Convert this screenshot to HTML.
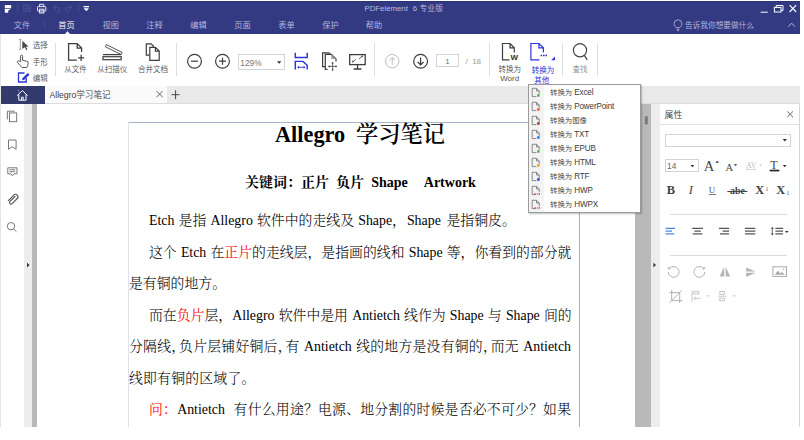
<!DOCTYPE html>
<html lang="zh-CN">
<head>
<meta charset="utf-8">
<title>PDFelement 6 专业版</title>
<style>
html,body{margin:0;padding:0;background:#fff;}
body{font-weight:350;width:804px;height:440px;position:relative;overflow:hidden;font-family:"Liberation Sans","Noto Sans CJK SC",sans-serif;}
#app{position:absolute;left:0;top:0;width:800px;height:427px;background:#fff;overflow:hidden;}
#app>*{position:absolute;}
#titlebar{left:0;top:1px;width:800px;height:33px;background:#333a82;box-shadow:inset 0 1px 0 #2b3179;}
.menu{position:absolute;font-size:8.2px;line-height:10px;color:#b9bde2;white-space:pre;transform:translateX(-50%);}
.menu.active{color:#fff;}
.rt{position:absolute;font-size:7.5px;line-height:9px;color:#4f4f4f;white-space:nowrap;}
.rtc{position:absolute;font-size:7.5px;line-height:9.6px;color:#4f4f4f;white-space:nowrap;transform:translateX(-50%);text-align:center;}
.vsep{position:absolute;width:1px;background:#dedede;}
#tabbar{left:0;top:86px;width:800px;height:17.5px;background:#e9e9e9;box-shadow:inset 0 -1px 0 #dcdcdc;}
#hometab{position:absolute;left:1px;top:0;width:43.5px;height:17.5px;background:#333a6e;}
#doctab{position:absolute;left:44.5px;top:0;width:122.5px;height:16.7px;background:#fafafa;}
#page{left:128px;top:122px;width:452px;height:320px;border:1px solid #dfe2ec;border-top-color:#a9b1cb;border-right-color:#a9b0cb;background:#fff;box-sizing:border-box;}
.doc{font-family:"Liberation Serif","Noto Serif CJK SC",serif;color:#000;font-weight:300;}
.ln{position:absolute;white-space:pre;font-size:13.87px;line-height:16px;word-spacing:0.7px;}
.ln i{font-style:normal;}
.ln b.c{font-weight:normal;margin-right:-0.45em;}
.red{color:#ff0a0a;font-weight:400;}
.j{text-align:justify;text-align-last:justify;}
#dropdown{left:528px;top:84px;width:113px;height:128.5px;background:#fff;border:1px solid #9b9b9b;box-sizing:border-box;box-shadow:1px 1px 1.5px rgba(0,0,0,0.25);}
#dropdown .gut{position:absolute;left:0;top:0;width:14.5px;height:100%;background:#f3f3f3;}
.dd{position:absolute;left:21px;font-size:7.4px;line-height:9px;color:#3a3a3a;white-space:pre;}
.dd .la{font-size:8.1px;letter-spacing:-0.15px;display:inline-block;transform:scaleY(1.12);transform-origin:50% 75%;}
#props{left:660px;top:103.5px;width:139.5px;height:324px;background:#fff;border-right:1px solid #d6d6d6;box-sizing:border-box;}
.pt{position:absolute;font-family:"Liberation Serif",serif;font-weight:400;color:#444;line-height:14px;white-space:nowrap;}
#icons{left:0;top:0;width:804px;height:440px;pointer-events:none;}
</style>
</head>
<body>
<div id="app">
  <div id="titlebar">
    <div class="menu" style="left:404.5px;top:2.6px;font-size:7.8px;transform:none;left:364.5px;word-spacing:0.3px;">PDFelement  6 专业版</div>
    <div class="menu" style="left:22px;top:20.2px">文件</div>
    <div class="menu active" style="left:66.5px;top:20.2px">首页</div>
    <div class="menu" style="left:110.7px;top:20.2px">视图</div>
    <div class="menu" style="left:154.5px;top:20.2px">注释</div>
    <div class="menu" style="left:198.5px;top:20.2px">编辑</div>
    <div class="menu" style="left:242.5px;top:20.2px">页面</div>
    <div class="menu" style="left:286.5px;top:20.2px">表单</div>
    <div class="menu" style="left:330.5px;top:20.2px">保护</div>
    <div class="menu" style="left:374px;top:20.2px">帮助</div>
    <div class="menu" style="left:719.5px;top:20px;font-size:7.7px;color:#b9bde0">告诉我你想要做什么</div>
  </div>
  <div id="ribbon" style="left:0;top:34px;width:800px;height:52px;background:#fff;border-left:1px solid #e4e4e4;box-sizing:border-box;">
    <div class="rt" style="left:31.7px;top:7.3px">选择</div>
    <div class="rt" style="left:31.7px;top:23.8px">手形</div>
    <div class="rt" style="left:31.7px;top:40.2px">编辑</div>
    <div class="vsep" style="left:53.5px;top:9px;height:33px"></div>
    <div class="rtc" style="left:74.5px;top:30.8px">从文件</div>
    <div class="rtc" style="left:111.2px;top:30.8px">从扫描仪</div>
    <div class="rtc" style="left:152px;top:30.8px">合并文档</div>
    <div class="vsep" style="left:175px;top:9px;height:33px"></div>
    <div style="position:absolute;left:237px;top:20px;width:47px;height:15.5px;border:1px solid #d3d3d3;box-sizing:border-box;"></div>
    <div class="rt" style="left:239.3px;top:24.6px;font-size:8.3px;color:#777">129%</div>
    <div class="vsep" style="left:373px;top:9px;height:33px"></div>
    <div style="position:absolute;left:435.3px;top:20px;width:22.5px;height:12.5px;border:1px solid #d3d3d3;box-sizing:border-box;"></div>
    <div class="rtc" style="left:446.5px;top:23.1px;font-size:8px;color:#777">1</div>
    <div class="rt" style="left:464.5px;top:23.1px;font-size:8px;color:#999;white-space:pre;">/  18</div>
    <div class="vsep" style="left:488px;top:9px;height:33px"></div>
    <div class="rt wlet" style="left:509.5px;top:19.2px;font-size:8px;font-weight:bold;color:#333;font-family:'Liberation Sans',sans-serif;">W</div>
    <div class="rtc" style="left:508.7px;top:30.8px">转换为<br><span style="font-size:8px">Word</span></div>
    <div class="rtc" style="left:542px;top:32.2px;color:#2a35d8;font-weight:400;line-height:9.4px">转换为<br><span style="position:relative;left:-1.3px">其他</span></div>
    <div class="vsep" style="left:561px;top:9px;height:33px"></div>
    <div class="rtc" style="left:579px;top:30.8px;color:#8a8a8a">查找</div>
    <div class="vsep" style="left:596px;top:9px;height:33px"></div>
  </div>
  <div id="tabbar">
    <div id="hometab"></div>
    <div id="doctab"><div class="rt" style="left:5px;top:4.3px;font-size:8.6px;line-height:10px;color:#444">Allegro学习笔记</div></div>
  </div>
  <div id="sidebar" style="left:0;top:103.5px;width:23.5px;height:324px;background:#fff;border-left:1px solid #e4e4e4;box-sizing:border-box;"></div>
  <div style="left:23.5px;top:103.5px;width:8.7px;height:324px;background:#ededed;"></div>
  <div style="left:32.2px;top:103.5px;width:5px;height:324px;background:#b9b9b9;"></div>
  <div style="left:635px;top:103.5px;width:16.2px;height:324px;background:#b9b9b9;"></div>
  <div style="left:651.2px;top:103.5px;width:8.8px;height:324px;background:#ededed;"></div>
  <div id="page" class="doc">

      <div class="ln ttl" style="left:146px;top:-2.2px;font-weight:600;font-size:22.3px;line-height:28px;word-spacing:-0.2px;"><b>Allegro</b>  学习笔记</div>
      <div class="ln sub" style="left:116px;top:50.5px;font-weight:bold;font-size:14px;line-height:18px;word-spacing:0.6px;">关键词：正片<span style="margin-left:3px"> </span>负片<span style="margin-left:3px"> </span>Shape   <span style="margin-left:3.7px">Artwork</span></div>
      <div class="ln" style="left:20px;top:90px;"><i>Etch</i> 是指 <i>Allegro</i> 软件中的走线及 <i>Shape</i>，<i style="margin-left:1px">Shape</i> <span style="margin-left:1.5px">是指铜皮。</span></div>
      <div class="ln j" style="left:20px;width:422px;top:121.5px;">这个 <i>Etch</i> 在<span class="red">正片</span>的走线层，是指画的线和 <i>Shape</i> 等，你看到的部分就</div>
      <div class="ln" style="left:0px;top:153px;">是有铜的地方。</div>
      <div class="ln j" style="left:20px;width:422px;top:184.5px;">而在<span class="red">负片</span>层，<i>Allegro</i> 软件中是用 <i>Antietch</i> 线作为 <i>Shape</i> 与 <i>Shape</i> 间的</div>
      <div class="ln j" style="left:0px;width:442px;top:216px;">分隔线<b class="c">，</b>负片层铺好铜后<b class="c">，</b>有 <i>Antietch</i> 线的地方是没有铜的<b class="c">，</b>而无 <i>Antietch</i></div>
      <div class="ln" style="left:0px;top:247.5px;letter-spacing:0.2px;">线即有铜的区域了。</div>
      <div class="ln j" style="left:20px;width:422px;top:279px;"><span class="red">问：</span><i>Antietch</i>  有什么用途？电源、地分割的时候是否必不可少？如果</div>
  </div>
  <div id="props">
    <div class="rt" style="left:4.5px;top:6px;font-size:9px;line-height:11px;color:#444">属性</div>
    <div style="position:absolute;left:0;top:20.5px;width:139px;height:1px;background:#e3e3e3"></div>
    <div style="position:absolute;left:4.5px;top:30px;width:126.5px;height:13.5px;border:1px solid #d3d3d3;box-sizing:border-box;"></div>
    <div style="position:absolute;left:4.5px;top:55.7px;width:34.2px;height:13.3px;border:1px solid #d3d3d3;box-sizing:border-box;"></div>
    <div class="rt" style="left:7px;top:58.1px;font-size:8.4px;color:#666">14</div>
    <div class="pt" id="pA1" style="left:43.7px;top:55.4px;font-size:14.6px;">A</div>
    <div class="pt" id="pA2" style="left:65.6px;top:57.3px;font-size:10.6px;">A</div>
    <div class="pt" id="pAV" style="left:86px;top:55px;font-size:8px;color:#bcbcbc;">AV</div>
    <div class="pt" id="pT" style="left:110.3px;top:54.8px;font-size:12px;">T</div>
    <div class="pt" id="pB" style="left:6.8px;top:79.9px;font-size:12.4px;font-weight:bold;">B</div>
    <div class="pt" id="pI" style="left:28.7px;top:79.9px;font-size:12.4px;font-style:italic;">I</div>
    <div class="pt" id="pU" style="left:48.8px;top:79.3px;font-size:9px;color:#555;">U</div>
    <div class="pt" id="pabe" style="left:67.4px;top:80.8px;font-size:10px;font-weight:bold;text-decoration:line-through;white-space:pre;"> abe </div>
    <div class="pt" id="pX1" style="left:95.3px;top:79.9px;font-size:12.4px;font-weight:bold;">X</div>
    <div class="pt" id="p11" style="left:105.6px;top:78.6px;font-size:5.5px;">1</div>
    <div class="pt" id="pX2" style="left:116.2px;top:79.9px;font-size:12.4px;font-weight:bold;">X</div>
    <div class="pt" id="p12" style="left:126.6px;top:82.4px;font-size:5.5px;">1</div>
    <div style="position:absolute;left:9.7px;top:110.5px;width:117.5px;height:1px;background:#dcdcdc"></div>
    <div style="position:absolute;left:9.7px;top:151.3px;width:117.5px;height:1px;background:#dcdcdc"></div>
  </div>
  <div id="dropdown">
    <div class="gut"></div>
    <div class="dd" style="top:3.3px">转换为 <span class="la">Excel</span></div>
    <div class="dd" style="top:17.3px">转换为 <span class="la">PowerPoint</span></div>
    <div class="dd" style="top:31.3px">转换为图像</div>
    <div class="dd" style="top:45.3px">转换为 <span class="la">TXT</span></div>
    <div class="dd" style="top:59.3px">转换为 <span class="la">EPUB</span></div>
    <div class="dd" style="top:73.3px">转换为 <span class="la">HTML</span></div>
    <div class="dd" style="top:87.3px">转换为 <span class="la">RTF</span></div>
    <div class="dd" style="top:101.3px">转换为 <span class="la">HWP</span></div>
    <div class="dd" style="top:115.3px">转换为 <span class="la">HWPX</span></div>
  </div>
  <svg id="icons" width="804" height="440" viewBox="0 0 804 440" fill="none" stroke-linecap="butt" stroke-linejoin="miter">
    <!-- title bar -->
    <g fill="#fff" stroke="none">
      <rect x="4.8" y="5.1" width="6.4" height="3.2"/>
      <path d="M4.8 9h5.6l-2.2 1.7v2.1h-3.4z"/>
    </g>
    <path d="M17.4 4.4v8.1M78.6 4.4v8.1" stroke="#4d5498" stroke-width="0.8"/>
    <path d="M44.5 20.2v8.600" stroke="#464d92" stroke-width="0.8"/>
    <g stroke="#4a5196" stroke-width="0.9">
      <path d="M23.8 4.7h5.2l1.5 1.5v5.2h-6.7z"/>
      <path d="M25.6 4.7v2.3h2.8v-2.3M25.3 11.4v-2.9h3.7v2.9"/>
      <path d="M56.3 4.900l-2.900 2.500 2.900 2.500M53.600 7.400h3.800a2.300 2.300 0 0 1 0 4.600h-1.200"/>
      <path d="M69 4.900l2.900 2.500-2.900 2.500M71.700 7.400h-3.800a2.300 2.300 0 0 0 0 4.600h1.200"/>
    </g>
    <g stroke="#fff" stroke-width="0.9">
      <path d="M39.6 6.6v-2.3h4.2v2.3"/>
      <rect x="37.5" y="6.6" width="8.3" height="4.6" rx="0.8"/>
      <rect x="39.6" y="9.2" width="4.2" height="3.8" fill="#333a82"/>
      <path d="M40.3 10.6h2.8M40.3 11.8h2.8" stroke-width="0.6"/>
    </g>
    <g fill="#fff" stroke="none">
      <rect x="83.6" y="6" width="5.4" height="1.3"/>
      <path d="M83.6 8.2h5.4l-2.7 3z"/>
    </g>
    <!-- window controls -->
    <g stroke="#fff" stroke-width="1">
      <path d="M760.6 12.2h7.2"/>
      <path d="M776.2 7.2v-1.7h6.8v5h-1.8"/>
      <rect x="774.4" y="7.4" width="6.6" height="4.6"/>
      <path d="M789.6 5.2l6.6 6.8M796.2 5.2l-6.6 6.8" stroke-width="1.1"/>
      <path d="M788.3 26.6l3.3-3.4 3.3 3.4" stroke="#c4c8e6" stroke-width="0.9"/>
    </g>
    <g stroke="#b9bde0" stroke-width="0.8">
      <path d="M676.3 27.6c-1.6-1.3-2.2-2.4-2.2-3.9a3.9 3.9 0 0 1 7.8 0c0 1.5-0.6 2.6-2.2 3.9z"/>
      <path d="M676.6 29.2h2.8M677 30.6h2"/>
    </g>
    <!-- active tab pointer -->
    <path d="M64.8 34.2l2.7-3 2.7 3z" fill="#fff" stroke="none"/>
    <!-- ribbon: select / hand / edit -->
    <path d="M19.2 39.6h2.2M19.2 49.4h2.2M20.3 39.6v9.8" stroke="#8a8a8a" stroke-width="0.8"/>
    <path d="M22.3 40.8l6.2 5.6-2.6 0.3 1.6 3-1.2 0.6-1.6-3-2.4 1.8z" fill="#4a4a4a" stroke="none"/>
    <path d="M20.6 61.6v-5.4a1 1 0 0 1 2 0v4.2l3.9 0.7a2 2 0 0 1 1.7 2.2c-0.1 1.8-0.6 3-1.5 4.2h-4.6c-1.6-1.500-3.2-3.300-4.600-5.200a1 1 0 0 1 1.500-1.300z" stroke="#444" stroke-width="0.9" stroke-linejoin="round"/>
    <path d="M26.2 78v4h-7.700v-9h6" stroke="#2a35d8" stroke-width="1.3"/>
    <path d="M22 80.300l0.600-2.300 5.200-5 1.700 1.700-5.200 5z" fill="#2a35d8" stroke="none"/>
    <!-- from file -->
    <path d="M76.800 60h-8.200v-16.400h8.600l4.400 4.400v4M77.200 43.600v4.400h4.400" stroke="#3c3c3c" stroke-width="1.25"/>
    <path d="M78 57.800h6.200M81.100 54.700v6.200" stroke="#3c3c3c" stroke-width="1.25"/>
    <!-- scanner -->
    <rect x="103" y="56.700" width="18.200" height="3" stroke="#3c3c3c" stroke-width="1.2"/>
    <path d="M103 54.600h18.200" stroke="#3c3c3c" stroke-width="1.2"/>
    <path d="M106.300 44.600l15.900 7.800-1.100 2.100-15.900-7.800z" stroke="#444" stroke-width="0.9"/>
    <!-- merge docs -->
    <path d="M149.300 55.200h-3v-11.400h4.800l2.200 2.200v1" stroke="#3c3c3c" stroke-width="1.2"/>
    <path d="M149.800 47.300h5.600l3.800 3.800v9.200h-9.400zM155.400 47.300v3.800h3.800" stroke="#3c3c3c" stroke-width="1.2"/>
    <!-- zoom out / in -->
    <circle cx="194.500" cy="61.200" r="6.900" stroke="#3c3c3c" stroke-width="1.2"/>
    <path d="M191 61.200h7" stroke="#3c3c3c" stroke-width="1.2"/>
    <circle cx="222.500" cy="61.200" r="6.900" stroke="#3c3c3c" stroke-width="1.2"/>
    <path d="M219 61.200h7M222.500 57.700v7" stroke="#3c3c3c" stroke-width="1.2"/>
    <path d="M277 61.200h4.400l-2.200 2.600z" fill="#333" stroke="none"/>
    <!-- fit width (blue) -->
    <g stroke="#2a35d8" stroke-width="1.45">
      <path d="M295.300 52.700v4.800h11.900v-4.800"/>
      <path d="M295.300 69.600v-8.200h7.700l4.200 3.900v4.300"/>
      <path d="M298 67.300h6.600" stroke-width="0.9"/>
    </g>
    <path d="M297.200 67.300l1.800-1.500v3zM305.400 67.300l-1.800-1.500v3z" fill="#2a35d8" stroke="none"/>
    <!-- pages move -->
    <path d="M325 66.600h-2.400v-13.800h6.300l1.300 1.300" stroke="#3c3c3c" stroke-width="1.2"/>
    <path d="M327.600 69.300h-2.300v-15h6.100l4.600 4.600v2.600" stroke="#3c3c3c" stroke-width="1.2"/>
    <path d="M331.400 54.300l4.600 4.600h-4.600z" fill="#999" stroke="none"/>
    <path d="M332.600 62.600v7.600M328.800 66.400h7.600" stroke="#444" stroke-width="0.8"/>
    <path d="M332.600 61.800l1.300 1.600h-2.600zM332.600 71l1.300-1.600h-2.600zM328 66.400l1.600-1.300v2.600zM337.200 66.400l-1.600-1.300v2.600z" fill="#444" stroke="none"/>
    <!-- monitor -->
    <rect x="349.700" y="54.600" width="15.500" height="10" stroke="#3c3c3c" stroke-width="1.3"/>
    <path d="M357.500 64.600v4M353.600 69h7.800" stroke="#3c3c3c" stroke-width="1.3"/>
    <path d="M352.800 61.800l3-2.500M359 58.800l3.200-2.600" stroke="#444" stroke-width="0.800"/>
    <path d="M352 62.500l0.600-2.200 1.500 1.700zM363 55.500l-0.600 2.200-1.500-1.700z" fill="#444" stroke="none"/>
    <!-- page up (disabled) / down -->
    <circle cx="392.200" cy="61.200" r="6.700" stroke="#bdbdbd" stroke-width="1"/>
    <path d="M392.200 64.800v-7M389.300 60.400l2.900-2.900 2.900 2.900" stroke="#bdbdbd" stroke-width="1"/>
    <circle cx="420.600" cy="61.200" r="6.900" stroke="#3c3c3c" stroke-width="1.2"/>
    <path d="M420.600 57.600v7M417.700 62l2.900 2.900 2.900-2.900" stroke="#3c3c3c" stroke-width="1.2"/>
    <!-- to word -->
    <path d="M509.500 59.800h-7v-16.300h7.500l4.300 4.300v4.700M510 43.500v4.300h4.300" stroke="#3c3c3c" stroke-width="1.2"/>
    <!-- to other (blue) -->
    <path d="M539.500 59.800h-8.600v-16.300h8l4.500 4.300v4.700M538.900 43.500v4.300h4.500" stroke="#2a35d8" stroke-width="1.200"/>
    <path d="M540.600 55.500h1.600M543 55.500h1.600M545.400 55.500h1.600" stroke="#2a35d8" stroke-width="1.300"/>
    <path d="M555 56.600v3.600h-3.800z" fill="#2a35d8" stroke="none"/>
    <!-- find -->
    <circle cx="580" cy="50.300" r="6.600" stroke="#444" stroke-width="1.2"/>
    <path d="M584.300 55.400l3 4.400" stroke="#444" stroke-width="1.3"/>
    <!-- tab bar -->
    <path d="M17.200 95.600l5.200-5 5.200 5M18.800 94.400v5.800h7.200v-5.800M21.600 100.200v-3h1.600v3" stroke="#fff" stroke-width="1" stroke-linejoin="round"/>
    <path d="M18.300 90.300l0.900 1" stroke="#fff" stroke-width="0.8"/>
    <path d="M156.600 91l6 6.200M162.600 91l-6 6.200" stroke="#555" stroke-width="0.9"/>
    <path d="M171.600 94.700h8M175.600 90.200v9" stroke="#444" stroke-width="1"/>
    <!-- left sidebar -->
    <g stroke="#6a6a6a" stroke-width="0.9">
      <path d="M7.400 119.400v-8.200h7.400"/>
      <rect x="9.500" y="112.900" width="7.200" height="8.800"/>
      <path d="M8.500 140h7.600v9.200l-3.800-2.400-3.800 2.400z"/>
      <path d="M7.800 167.800h9.200v6h-3l-1.600 2-1.600-2h-3zM9.600 169.800h5.600M9.600 171.700h5.600"/>
      <path d="M15 196.500l-5.200 5.200a1.500 1.500 0 0 0 2.100 2.100l5.300-5.300a2.400 2.400 0 0 0-3.400-3.400l-5.500 5.500" stroke-linecap="round" stroke="#555" stroke-width="1.1"/>
      <circle cx="11" cy="226.200" r="3.700"/>
      <path d="M13.700 229l2.800 2.800"/>
    </g>
    <path d="M27 262.800l2.600 2.300-2.600 2.300z" fill="#333" stroke="none"/>
    <path d="M653.400 262.800l2.600 2.300-2.600 2.300z" fill="#333" stroke="none"/>
    <rect x="644.800" y="116.300" width="3" height="8" fill="#7a7a7a" stroke="none"/>
    <!-- props panel -->
    <path d="M787.200 111.400l5.800 5.800M793 111.400l-5.800 5.800" stroke="#555" stroke-width="0.9"/>
    <g fill="#333" stroke="none">
      <path d="M782.600 139h4.400l-2.200 2.600z"/>
      <path d="M690.500 165h3.800l-1.900 2.200z"/>
      <path d="M715.400 162.800h3.600l-1.800-2z"/>
      <path d="M733.800 164.200h3.400l-1.700 1.900z"/>
      <path d="M782.800 165h3.800l-1.900 2.200z"/>
      <rect x="769.700" y="169.700" width="9.600" height="1.700" fill="#222"/>
      <path d="M785 231h3.600l-1.800 2.100z"/>
    </g>
    <path d="M759 164.600h3l-1.500 1.700z" fill="#c4c4c4" stroke="none"/>
    <path d="M746.600 169.400h9" stroke="#c4c4c4" stroke-width="0.700"/>
    <path d="M746.200 169.400l1.500-1.100v2.200zM756 169.400l-1.500-1.100v2.200z" fill="#c4c4c4" stroke="none"/>
    <path d="M708.800 194.500h7.200" stroke="#555" stroke-width="0.800"/>
    <!-- alignment -->
    <g stroke="#4a86e8" stroke-width="1.300">
      <path d="M665.600 228.400h9.400M665.600 231.100h6.400M665.600 233.800h8.600"/>
    </g>
    <g stroke="#555" stroke-width="1.200">
      <path d="M692.200 228.400h10.800M694.400 231.100h6.400M692.800 233.800h9.600"/>
      <path d="M718.900 228.400h10.200M722.600 231.100h6.500M720 233.800h9.100"/>
      <path d="M745 228.400h10.300M745 231.100h10.300M745 233.800h10.300"/>
      <path d="M775.400 228.400h7.600M775.400 231.100h7.600M775.400 233.800h7.600"/>
      <path d="M772.300 228.200v6" stroke-width="0.900"/>
    </g>
    <path d="M772.300 226.800l1.600 1.900h-3.200zM772.300 235.400l1.600-1.900h-3.200z" fill="#555" stroke="none"/>
    <!-- rotate etc (disabled) -->
    <g stroke="#a9a9a9" stroke-width="0.900">
      <path d="M669.600 268.400a5.400 5.400 0 1 1-1.300 3.600"/>
      <path d="M703.400 268.400a5.400 5.400 0 1 0 1.300 3.600"/>
      <rect x="772.900" y="266.800" width="13.600" height="9.600" stroke-width="1"/>
      <path d="M669.300 292.600h10.400v10.400M671.700 290v10.600h10.600M669.400 302.800l12.400-12.400" stroke-width="0.900"/>
    </g>
    <g fill="#a9a9a9" stroke="none">
      <path d="M667.200 267.200l2.800 0.200-0.300 2.800z"/>
      <path d="M705.800 267.200l-2.800 0.200 0.300 2.800z"/>
      <path d="M724.200 266.800v9.800h-4.600zM725.600 266.800v9.800h4.600z" fill="#b4b4b4"/>
      <path d="M746.200 267.400h0l9.400 4.200h-9.400zM746.200 272.800h9.400l-9.400 4.200z" fill="#b4b4b4"/>
      <path d="M774.600 274.800l3.400-4 2.400 2.600 1.600-1.400 2.800 2.800z"/>
      <circle cx="783.500" cy="269.300" r="0.800"/>
      <path d="M706 295.200h3.200l-1.600 1.800z" fill="#c9c9c9"/>
      <path d="M732.600 295.200h3.200l-1.600 1.800z" fill="#c9c9c9"/>
    </g>
    <g stroke="#b9b9b9" stroke-width="0.800">
      <path d="M692 290.400v11.600"/>
      <rect x="693.800" y="291.600" width="5" height="2.400"/>
      <path d="M693.800 298.400h6.800M695.600 296.800l-1.800 1.600 1.800 1.600"/>
      <path d="M718 296.200h8.200"/>
      <rect x="719.800" y="291.600" width="4.600" height="2.600"/>
      <rect x="719.800" y="298.200" width="4.600" height="2.600"/>
    </g>
    <!-- dropdown icons -->
    <path d="M536.400 96.6h-4.200v-8.300h4.300l2.700 2.700v3M536.500 88.3v2.700h2.700" stroke="#6e6e6e" stroke-width="0.800"/>
    <rect x="537.200" y="94.2" width="2.400" height="2.500" fill="#3cb043" stroke="none"/>
    <path d="M536.400 110.6h-4.200v-8.300h4.300l2.700 2.700v3M536.500 102.3v2.700h2.700" stroke="#6e6e6e" stroke-width="0.800"/>
    <rect x="537.200" y="108.2" width="2.400" height="2.500" fill="#f4511e" stroke="none"/>
    <path d="M536.400 124.6h-4.200v-8.300h4.300l2.700 2.700v3M536.500 116.3v2.700h2.700" stroke="#6e6e6e" stroke-width="0.800"/>
    <rect x="537.200" y="122.2" width="2.400" height="2.500" fill="#8a3324" stroke="none"/>
    <path d="M536.400 138.6h-4.200v-8.300h4.300l2.700 2.700v3M536.500 130.3v2.700h2.700" stroke="#6e6e6e" stroke-width="0.800"/>
    <rect x="537.200" y="136.2" width="2.400" height="2.500" fill="#1a73e8" stroke="none"/>
    <path d="M536.400 152.6h-4.200v-8.300h4.300l2.700 2.700v3M536.500 144.3v2.700h2.700" stroke="#6e6e6e" stroke-width="0.800"/>
    <rect x="537.200" y="150.2" width="2.400" height="2.500" fill="#3cb043" stroke="none"/>
    <path d="M536.400 166.6h-4.200v-8.300h4.300l2.700 2.700v3M536.500 158.3v2.700h2.700" stroke="#6e6e6e" stroke-width="0.800"/>
    <rect x="537.200" y="164.2" width="2.400" height="2.500" fill="#f39c12" stroke="none"/>
    <path d="M536.400 180.6h-4.200v-8.300h4.300l2.700 2.700v3M536.500 172.3v2.700h2.700" stroke="#6e6e6e" stroke-width="0.800"/>
    <rect x="537.200" y="178.2" width="2.400" height="2.500" fill="#2a35d8" stroke="none"/>
    <path d="M536.400 194.6h-4.200v-8.300h4.300l2.700 2.700v3M536.500 186.3v2.700h2.700" stroke="#6e6e6e" stroke-width="0.800"/>
    <path d="M534.200 193.9h1.800M536.800 193.9h1.600M538.800 192.9l1.200 1-1.200 1" stroke="#e53935" stroke-width="0.900"/>
    <path d="M536.400 208.6h-4.200v-8.300h4.300l2.700 2.700v3M536.500 200.3v2.700h2.700" stroke="#6e6e6e" stroke-width="0.800"/>
    <path d="M534.200 207.9h1.800M536.800 207.9h1.600M538.800 206.9l1.200 1-1.200 1" stroke="#e53935" stroke-width="0.900"/>
  </svg>
</div>
</body>
</html>
